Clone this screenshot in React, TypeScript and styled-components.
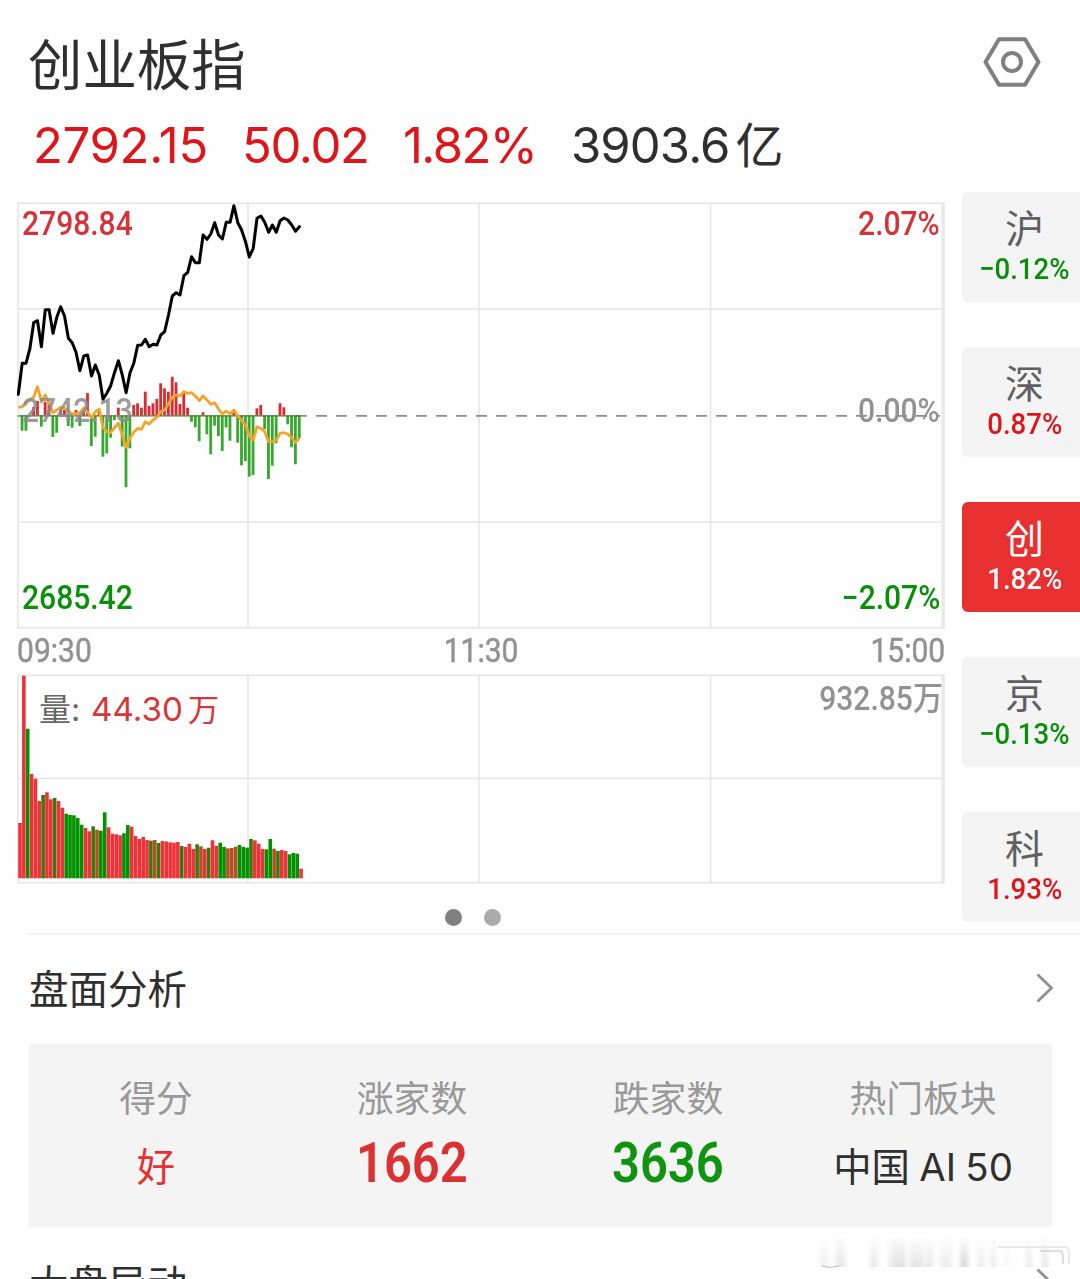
import React from "react";
import styled, { createGlobalStyle } from "styled-components";

const RED = "#e0151a";
const GREEN = "#0a8f0a";
const UI = `Inter, "Noto Sans CJK SC", sans-serif`;
const DIN = `Roboto, "Noto Sans CJK SC", sans-serif`;

const Global = createGlobalStyle`
  * { box-sizing: border-box; }
  html, body { margin: 0; background: #fefefe; }
  body { overflow: hidden; }
`;

const Page = styled.main`
  position: relative;
  display: flex;
  flex-direction: column;
  width: 1080px;
  height: 1279px;
  overflow: hidden;
  background: #fefefe;
  color: #2f2f2f;
  font-family: ${UI};
  white-space: nowrap;
  > * { flex: none; }
`;

const Header = styled.header`
  display: flex;
  justify-content: space-between;
  align-items: flex-start;
  height: 94px;
  padding: 33px 38px 0 28px;
`;

const Title = styled.h1`
  margin: 0;
  font-size: 54.4px;
  font-weight: 400;
  line-height: 64px;
`;

const Hexagon = styled.svg`
  margin-top: 2px;
`;

const Quotes = styled.div`
  display: flex;
  height: 98px;
  padding: 20px 0 0 33px;
  font-size: 49px;
  line-height: 64px;
`;

const Quote = styled.span<{ $w: number; $tone?: string; $ls?: number }>`
  width: ${(p) => p.$w}px;
  color: ${(p) => p.$tone ?? "#2f2f2f"};
  letter-spacing: ${(p) => p.$ls ?? 0}px;
`;

const Unit = styled.span<{ $size: number; $gap: number }>`
  margin-left: ${(p) => p.$gap}px;
  font-size: ${(p) => p.$size}px;
  letter-spacing: 0;
`;

const Market = styled.section`
  display: flex;
  justify-content: space-between;
  height: 741px;
  padding-left: 17px;
`;

const Charts = styled.div`
  display: flex;
  flex-direction: column;
  width: 928px;
  padding-top: 10px;
`;

const Panel = styled.div<{ $h: number }>`
  position: relative;
  height: ${(p) => p.$h}px;
  svg { display: block; }
`;

const Mark = styled.span<{
  $top: number;
  $side: "left" | "right";
  $inset: number;
  $tone: string;
  $size?: number;
  $weight?: number;
  $ui?: boolean;
}>`
  position: absolute;
  top: ${(p) => p.$top}px;
  ${(p) => p.$side}: ${(p) => p.$inset}px;
  color: ${(p) => p.$tone};
  font-family: ${(p) => (p.$ui ? UI : DIN)};
  font-size: ${(p) => p.$size ?? 33}px;
  font-weight: ${(p) => p.$weight ?? 500};
  line-height: 40px;
  transform: ${(p) => (p.$ui ? "none" : "scaleX(0.91)")};
  transform-origin: ${(p) => p.$side} center;
`;

const TimeAxis = styled.div`
  display: flex;
  justify-content: space-between;
  height: 45px;
  padding-top: 2px;
  color: #929292;
  font: 400 33px/40px ${DIN};
  -webkit-text-stroke: 0.5px currentColor;
`;

const Time = styled.span<{ $origin: string }>`
  transform: scaleX(0.91);
  transform-origin: ${(p) => p.$origin} center;
`;

const Dots = styled.div`
  display: flex;
  gap: 22px;
  padding: 25px 0 0 428px;
`;

const Dot = styled.i<{ $on?: boolean }>`
  width: 17px;
  height: 17px;
  border-radius: 50%;
  background: ${(p) => (p.$on ? "#808080" : "#ababab")};
`;

const Tabs = styled.nav`
  display: flex;
  flex-direction: column;
  gap: 45px;
  width: 118px;
`;

const Tab = styled.div<{ $active?: boolean }>`
  display: flex;
  flex-direction: column;
  align-items: center;
  height: 110px;
  flex: none;
  padding: 12px 0 0 7px;
  border-radius: 6px 0 0 6px;
  background: ${(p) => (p.$active ? "#e83030" : "#f4f4f4")};
  color: ${(p) => (p.$active ? "#fff" : "#606060")};
`;

const TabName = styled.span`
  font-size: 39px;
  line-height: 50px;
`;

const TabRate = styled.span<{ $tone: string }>`
  margin-top: -4px;
  color: ${(p) => p.$tone};
  font: 500 30px/38px ${DIN};
  transform: scaleX(0.92);
`;

const Section = styled.div`
  display: flex;
  align-items: flex-start;
  justify-content: space-between;
  height: 111px;
  margin-left: 28px;
  padding: 30px 26px 0 1px;
  border-top: 2px solid #f2f2f2;
  font-size: 39.5px;
  line-height: 50px;
`;

const NextSection = styled(Section)`
  padding-top: 31px;
  border-top-color: transparent;
`;

const Arrow = styled.svg`
  margin-top: 7px;
`;

const Analysis = styled.div`
  display: grid;
  grid-template-columns: 254px 258px 254px 256px;
  height: 183px;
  margin-left: 29px;
  width: 1023px;
  padding-top: 28px;
  background: #f4f4f4;
`;

const Stat = styled.div`
  display: flex;
  flex-direction: column;
  align-items: center;
`;

const Label = styled.span`
  color: #999;
  font-size: 36.8px;
  line-height: 54px;
`;

const Value = styled.span<{ $tone?: string }>`
  margin-top: 8px;
  color: ${(p) => p.$tone ?? "#2f2f2f"};
  font-size: 38.4px;
  line-height: 66px;
  word-spacing: -1.5px;
`;

const Count = styled.span<{ $tone: string }>`
  margin-top: 9px;
  color: ${(p) => p.$tone};
  font: 600 55px/56px ${DIN};
  transform: scaleX(0.89);
`;

const Watermark = styled.svg`
  position: absolute;
  left: 808px;
  top: 1230px;
`;

const STEP = 3.85;
const BASE = 415.5;

const price = [
  394.3, 363.3, 363.3, 348.5, 322.7, 320.7, 346.7, 309.7, 309.7, 333.3, 317.3, 306.7, 316, 338.3, 342.7,
  352.3, 370.7, 356, 355, 376, 365, 375, 399.3, 393.3, 385.7, 372.7, 360.7, 375, 392.7, 372.7, 363.3, 345.2,
  345, 339.3, 346.7, 344.3, 345, 335, 331.7, 315, 296, 292.7, 295, 275.7, 272.3, 256.7, 262.7, 262.7, 235,
  239.3, 234, 222.7, 235, 239, 222.3, 222.3, 205.7, 222.7, 230, 241.7, 257, 248.3, 218.3, 216, 222.3, 232.3,
  225, 232.3, 220.7, 218, 220, 225, 231.3, 226.7,
];

const lead = [
  407.3, 406.7, 403, 400, 397, 386.7, 402, 395, 403, 412.7, 410, 407, 408, 411, 414, 414, 412.7, 408, 412,
  417.7, 411.7, 409.3, 427.3, 431.7, 432.7, 427.7, 423.3, 435, 447.3, 438.3, 432.3, 428.3, 429.3, 421.7, 424,
  420, 417.3, 411.7, 410, 404, 397.3, 395, 396, 391.7, 393.3, 392.7, 396, 400.7, 396, 400, 404.3, 402.7, 409,
  414, 411, 414, 410, 416, 420.7, 425, 436, 440, 426.7, 428.3, 431.7, 441.7, 441.7, 440, 433.3, 432.7, 434,
  437.7, 442.3, 438.3,
];

const force = [
  416, 430.7, 430.7, 416, 407, 401, 426.7, 402, 402, 437, 432.7, 409, 410, 426, 427.7, 410, 426, 409, 393,
  446, 436.7, 411, 456.7, 453.3, 437.7, 420, 407.7, 446.7, 487.3, 448.3, 405, 403.3, 407.7, 391.7, 406, 403.3,
  399, 383.3, 388.3, 391.7, 376.7, 382.3, 404, 391.7, 407.7, 421.7, 427.3, 441.3, 412.3, 434.3, 454.3, 425.7,
  436, 451, 427.3, 440.7, 410.7, 442.7, 465.3, 461, 476.7, 475, 408.3, 405, 429.3, 479, 465.7, 443.3, 403.3,
  407.3, 424.3, 447.3, 464.3, 438.3,
];

const volumeTop = [
  823, 675.7, 728.7, 774, 778.7, 801, 795, 792.3, 799.3, 798, 801, 807.7, 813.7, 815, 815.3, 818, 824.7, 828,
  831.3, 826.3, 829.7, 830.7, 812.3, 827.3, 833.7, 834.3, 835.3, 833.3, 825, 826.7, 836, 839, 837, 840, 840.7,
  840, 843, 841, 841.5, 842.3, 842.7, 842, 846, 847, 843.7, 849, 844.3, 846.3, 849, 847.7, 840.3, 845.7,
  842.7, 847, 848.3, 848, 846.7, 845, 847, 847.7, 839, 840.3, 843.7, 849, 849.3, 839, 848.7, 851, 850, 851,
  854.3, 853, 853.7, 868.7,
];

const volumeTone = "rrgrrrmrrmrrgggggrrmbggrrrrggrrrrrmbmrrrrrmrrrmbrmrrggbbbgggmrrrggbmrrgggr";

const TONES: Record<string, string> = { r: "#ee3237", g: "#009200", m: "#38780c", b: "#b45026" };

const line = (ys: number[]) => ys.map((y, i) => `${(18.3 + i * STEP - 17).toFixed(1)},${(y - 202).toFixed(1)}`).join(" ");

function GridLines({ height, mid }: { height: number; mid: number[] }) {
  return (
    <g stroke="#e6e6e6" strokeWidth="1.6">
      <rect x="1" y="1.3" width="926" height={height - 2.6} fill="none" />
      {mid.map((y) => (
        <line key={y} x1="1" x2="926" y1={y} y2={y} />
      ))}
      {[231, 462, 693.5].map((x) => (
        <line key={x} x1={x} x2={x} y1="1" y2={height - 1} />
      ))}
      <line x1="925.4" x2="925.4" y1="1" y2={height - 1} />
    </g>
  );
}

function PriceChart() {
  return (
    <Panel $h={427}>
      <svg width="928" height="427">
        <GridLines height={427} mid={[107, 320]} />
        <line x1="279" x2="923" y1="213.8" y2="213.8" stroke="#8c8c8c" strokeWidth="1.8" strokeDasharray="11 9" />
        {force.map((y, i) => (
          <rect
            key={i}
            x={-0.2 + i * STEP}
            y={Math.min(y, BASE) - 202}
            width="2.8"
            height={Math.max(Math.abs(y - BASE), 1)}
            fill={y < BASE ? "#dc2a30" : "#38a82e"}
          />
        ))}
        <line x1="2" x2="283" y1="213.8" y2="213.8" stroke="#55752f" strokeWidth="1.2" />
        <polyline points={line(lead)} fill="none" stroke="#f5a42b" strokeWidth="2.8" strokeLinejoin="round" />
        <polyline
          points={line(price)}
          fill="none"
          stroke="#000"
          strokeWidth="3"
          strokeLinejoin="round"
          strokeLinecap="round"
        />
      </svg>
      <Mark $top={2} $side="left" $inset={5} $tone="#d63238">2798.84</Mark>
      <Mark $top={2} $side="right" $inset={5} $tone="#d63238">2.07%</Mark>
      <Mark $top={189} $side="left" $inset={5} $tone="rgba(140,140,140,.85)">2742.13</Mark>
      <Mark $top={189} $side="right" $inset={5} $tone="#929292">0.00%</Mark>
      <Mark $top={376} $side="left" $inset={5} $tone={GREEN}>2685.42</Mark>
      <Mark $top={376} $side="right" $inset={5} $tone={GREEN}>−2.07%</Mark>
    </Panel>
  );
}

function VolumeChart() {
  return (
    <Panel $h={210}>
      <svg width="928" height="210">
        <GridLines height={210} mid={[104.5]} />
        {volumeTop.map((y, i) => (
          <rect
            key={i}
            x={1.2 + i * STEP}
            y={y - 674}
            width="3.6"
            height={878.3 - y}
            fill={TONES[volumeTone[i]]}
          />
        ))}
      </svg>
      <Mark $top={16} $side="left" $inset={22} $tone="#666" $ui $weight={400} $size={32}>量:</Mark>
      <Mark $top={15} $side="left" $inset={74} $tone="#d8363b" $ui $weight={400} $size={33.2}>
        44.30<Unit $size={31} $gap={5}>万</Unit>
      </Mark>
      <Mark $top={5} $side="right" $inset={2} $tone="#929292" $weight={500}>932.85万</Mark>
    </Panel>
  );
}

function Chevron() {
  return (
    <Arrow width="18" height="32" viewBox="0 0 18 32" fill="none" stroke="#929292" strokeWidth="2.8">
      <path d="M1.5 2.5 15.5 16 1.5 29.5" />
    </Arrow>
  );
}

const tabs = [
  { name: "沪", rate: "−0.12%", tone: GREEN },
  { name: "深", rate: "0.87%", tone: RED },
  { name: "创", rate: "1.82%", tone: "#fff", active: true },
  { name: "京", rate: "−0.13%", tone: GREEN },
  { name: "科", rate: "1.93%", tone: RED },
];

const smudges = [
  [12, 8, 0.06], [28, 9, 0.12], [62, 8, 0.1], [80, 7, 0.08], [86, 12, 0.14], [102, 14, 0.12], [118, 7, 0.11],
  [132, 12, 0.08], [152, 8, 0.18], [170, 6, 0.09], [182, 6, 0.09], [196, 5, 0.04], [218, 6, 0.1], [234, 6, 0.12],
];

export default function App() {
  return (
    <>
      <Global />
      <Page>
        <Header>
          <Title>创业板指</Title>
          <Hexagon width="60" height="54" viewBox="0 0 60 54" fill="none" stroke="#808080" strokeWidth="4">
            <path d="M17 4.2H43L56.5 27 43 49.8H17L3.5 27Z" strokeLinejoin="round" />
            <circle cx="30" cy="27" r="9" />
          </Hexagon>
        </Header>
        <Quotes>
          <Quote $w={209} $tone={RED} $ls={-0.3}>2792.15</Quote>
          <Quote $w={161} $tone={RED} $ls={-1.3}>50.02</Quote>
          <Quote $w={168} $tone={RED} $ls={-1.6}>1.82%</Quote>
          <Quote $w={220} $ls={-0.9}>3903.6<Unit $size={48} $gap={6}>亿</Unit></Quote>
        </Quotes>
        <Market>
          <Charts>
            <PriceChart />
            <TimeAxis>
              <Time $origin="left">09:30</Time>
              <Time $origin="center">11:30</Time>
              <Time $origin="right">15:00</Time>
            </TimeAxis>
            <VolumeChart />
            <Dots>
              <Dot $on />
              <Dot />
            </Dots>
          </Charts>
          <Tabs>
            {tabs.map((t) => (
              <Tab key={t.name} $active={t.active}>
                <TabName>{t.name}</TabName>
                <TabRate $tone={t.tone}>{t.rate}</TabRate>
              </Tab>
            ))}
          </Tabs>
        </Market>
        <Section>
          <span>盘面分析</span>
          <Chevron />
        </Section>
        <Analysis>
          <Stat>
            <Label>得分</Label>
            <Value $tone="#e83030">好</Value>
          </Stat>
          <Stat>
            <Label>涨家数</Label>
            <Count $tone="#dc3133">1662</Count>
          </Stat>
          <Stat>
            <Label>跌家数</Label>
            <Count $tone="#0f940f">3636</Count>
          </Stat>
          <Stat>
            <Label>热门板块</Label>
            <Value>中国 AI 50</Value>
          </Stat>
        </Analysis>
        <NextSection>
          <span>大盘异动</span>
          <Chevron />
        </NextSection>
        <Watermark width="272" height="44" aria-hidden>
          <defs>
            <linearGradient id="fade" x1="0" y1="0" x2="0" y2="1">
              <stop offset="0" stopColor="#777" stopOpacity="0" />
              <stop offset="1" stopColor="#777" />
            </linearGradient>
            <filter id="soft" x="-100%" width="300%">
              <feGaussianBlur stdDeviation="2 0.3" />
            </filter>
          </defs>
          {smudges.map(([x, w, o]) => (
            <rect key={x} x={x} y="6" width={w} height="31" fill="url(#fade)" opacity={o * 1.5} filter="url(#soft)" />
          ))}
          <path d="M14 36q8 3 17 0" fill="none" stroke="#bbb" />
          <path d="M190 17h66q5 0 5 6v11" fill="none" stroke="#e4e4e4" strokeWidth="1.5" />
          <path d="M232 21h19q4 0 4 6v7" fill="none" stroke="#d4d4d4" strokeWidth="1.5" />
        </Watermark>
      </Page>
    </>
  );
}
